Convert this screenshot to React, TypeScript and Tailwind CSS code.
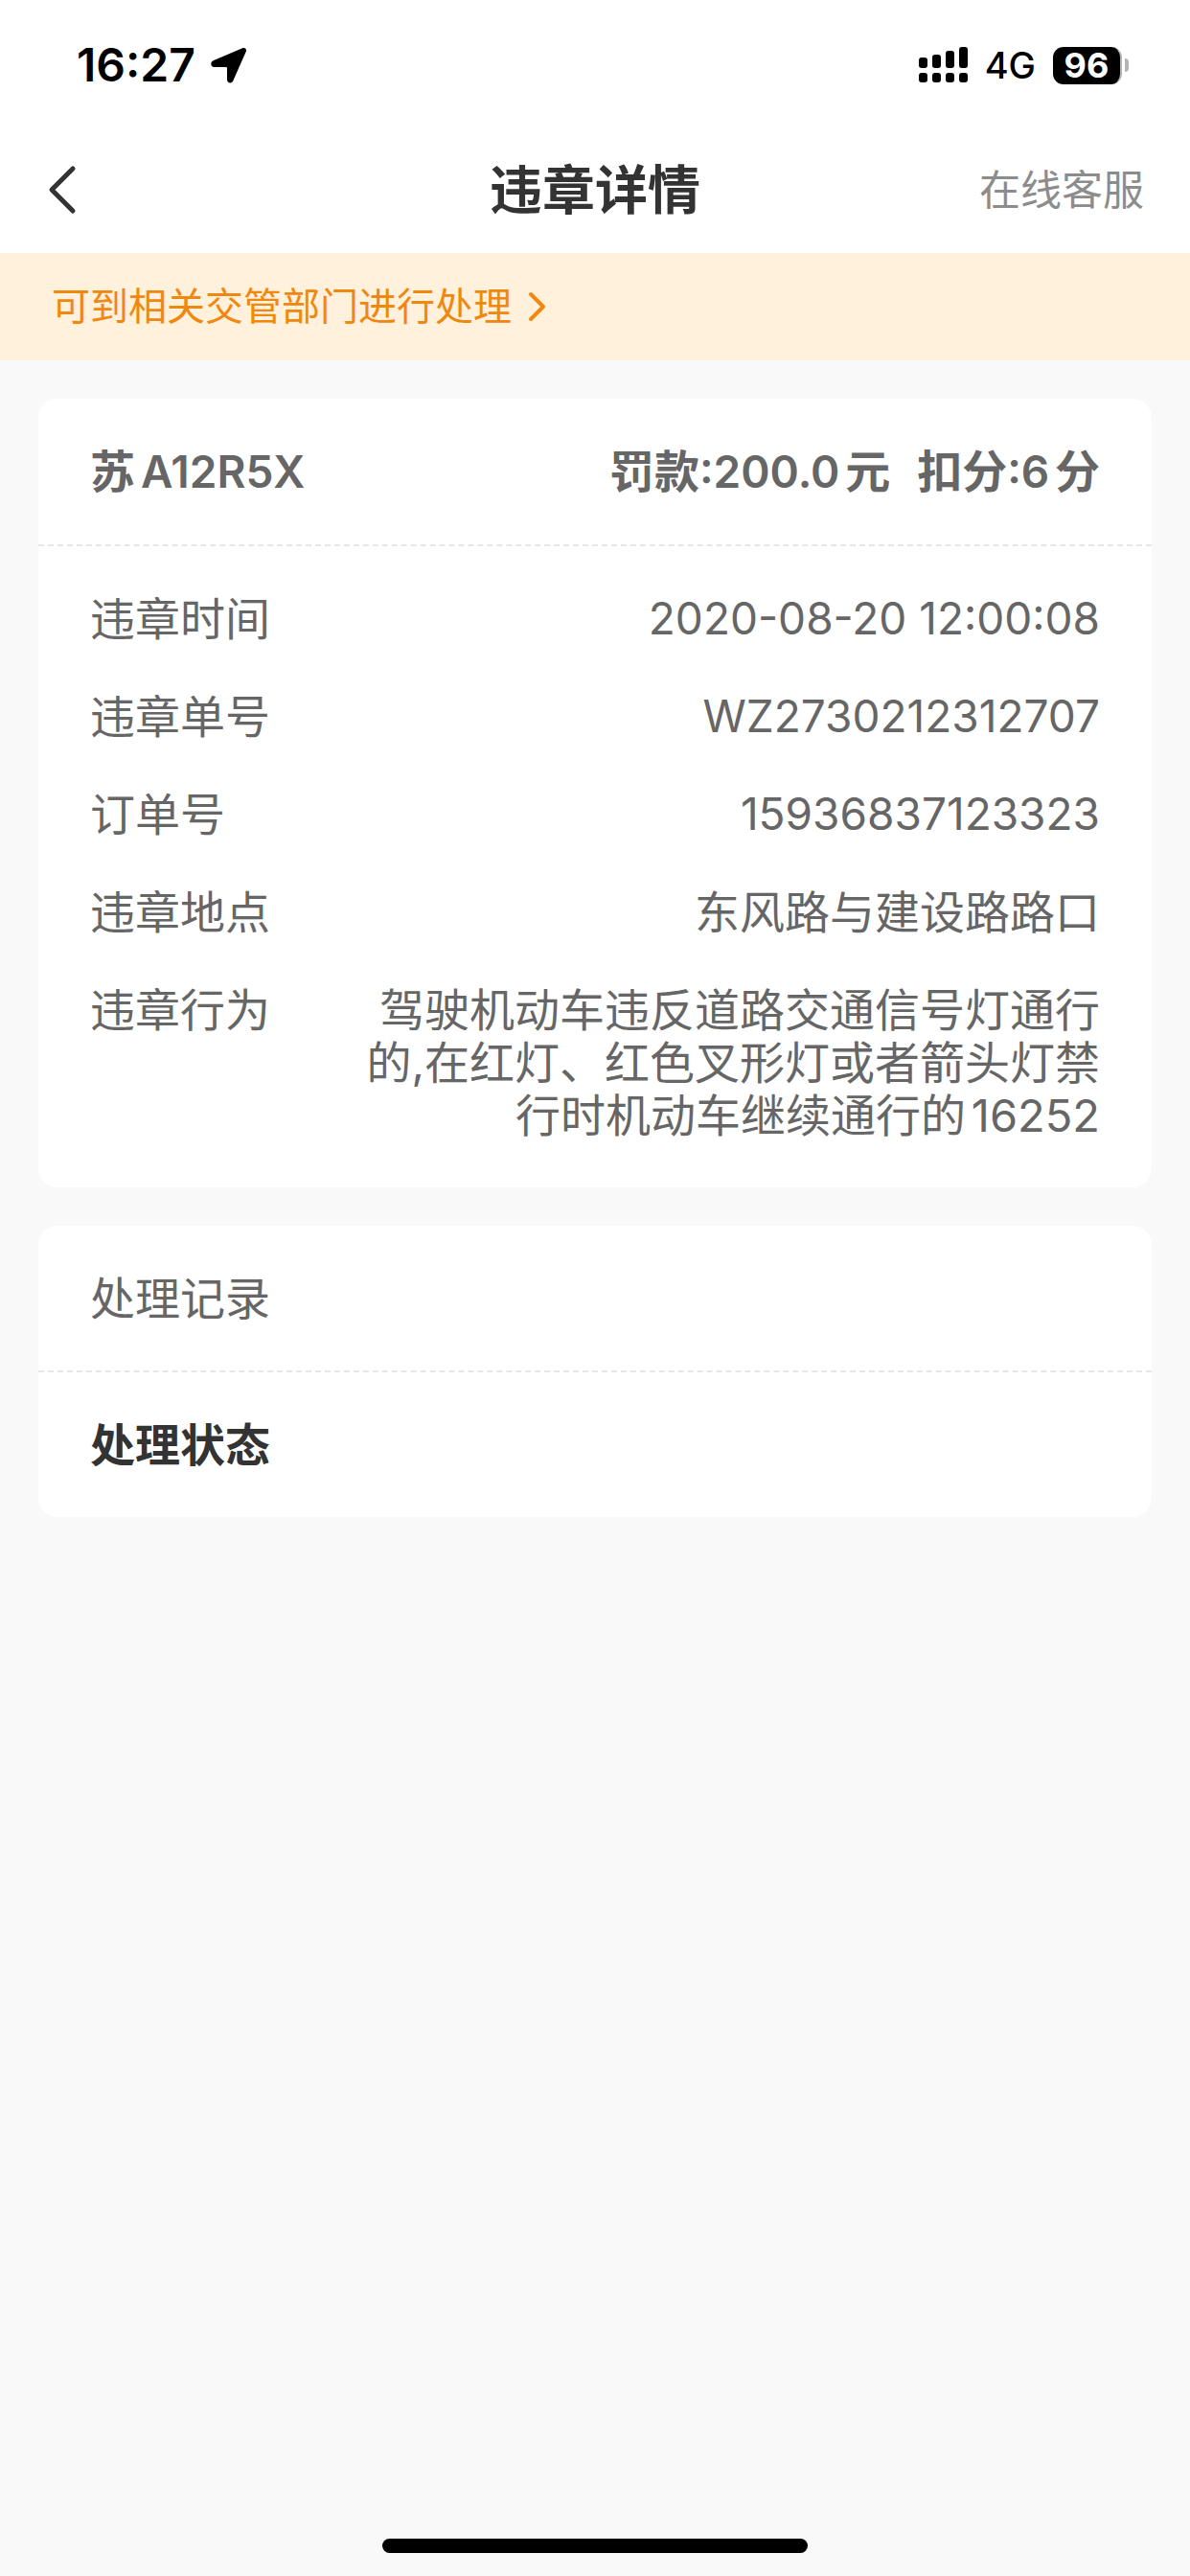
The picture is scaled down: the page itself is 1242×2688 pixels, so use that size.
import React from 'react';
import { clsx } from 'clsx';

type Row = {
  label: string;
  value: string;
};

const rows: Row[] = [
  { label: '违章时间', value: '2020-08-20 12:00:08' },
  { label: '违章单号', value: 'WZ2730212312707' },
  { label: '订单号', value: '15936837123323' },
  { label: '违章地点', value: '东风路与建设路路口' },
  {
    label: '违章行为',
    value:
      '驾驶机动车违反道路交通信号灯通行的,在红灯、红色叉形灯或者箭头灯禁行时机动车继续通行的16252',
  },
];

// numbers and latin letters are drawn a bit smaller than the chinese text
const isLatin = (text: string) => /^[\x20-\x7e]+$/.test(text);

const StatusBar = () => {
  return (
    <div className="flex h-[132px] items-center justify-between pt-1 pr-16 pl-20 text-black">
      <div className="flex items-center gap-4">
        <span className="text-[48px] leading-none font-semibold">16:27</span>
        <svg width="38" height="38" viewBox="0 0 38 38" aria-hidden="true">
          <path
            d="M2.5 14.2 33 1.3c2.8-1.1 4.8.9 3.7 3.7L23.2 35.5c-1.4 3-6.2 2.3-6.2-1.2V22.2c0-.8-.4-1.2-1.2-1.2H3.4C-.3 21-.8 15.700 2.5 14.2Z"
            fill="currentColor"
          />
        </svg>
      </div>
      <div className="flex items-center gap-[18px]">
        <svg width="51" height="38" viewBox="0 0 51 38" aria-hidden="true">
          <g fill="currentColor">
            <rect x="0" y="11" width="9" height="11" rx="3" />
            <rect x="14" y="8" width="9" height="14" rx="3" />
            <rect x="28" y="4" width="9" height="18" rx="3" />
            <rect x="42" y="0" width="9" height="22" rx="3" />
            <rect x="0" y="27" width="9" height="10" rx="3" />
            <rect x="14" y="27" width="9" height="10" rx="3" />
            <rect x="28" y="27" width="9" height="10" rx="3" />
            <rect x="42" y="27" width="9" height="10" rx="3" />
          </g>
        </svg>
        <span className="text-[38px] leading-none font-medium">4G</span>
        <div className="flex items-center gap-[3px]">
          <div className="flex h-[39px] w-[72px] items-center justify-center rounded-[11px] border-r-2 border-[#b4b4b4] bg-black text-[36px] leading-none font-bold text-white">
            96
          </div>
          <div className="h-[14px] w-1 rounded-r-full bg-[#b4b4b4]" />
        </div>
      </div>
    </div>
  );
};

const NavBar = () => {
  return (
    <div className="grid h-[132px] grid-cols-[1fr_auto_1fr] items-center pr-12 pl-12">
      <button type="button" aria-label="返回" className="justify-self-start">
        <svg width="33" height="54" viewBox="0 0 33 54" fill="none">
          <path
            d="M28 5 6 27 28 49"
            stroke="#333333"
            strokeWidth="5"
            strokeLinecap="round"
            strokeLinejoin="round"
          />
        </svg>
      </button>
      <h1 className="text-[55px] leading-none font-bold text-[#333333]">
        违章详情
      </h1>
      <a
        href="#service"
        className="justify-self-end text-[43px] leading-none text-[#8c8c8c]"
      >
        在线客服
      </a>
    </div>
  );
};

const Notice = () => {
  return (
    <a
      href="#notice"
      className="flex h-28 items-center gap-4 bg-[#fff1dc] px-[54px] text-[40px] leading-none text-[#f0870f]"
    >
      <span>可到相关交管部门进行处理</span>
      <svg width="20" height="34" viewBox="0 0 20 34" fill="none">
        <path
          d="M4 4 17 17 4 30"
          stroke="currentColor"
          strokeWidth="4"
          strokeLinecap="round"
          strokeLinejoin="round"
        />
      </svg>
    </a>
  );
};

const App = () => {
  return (
    <div className="flex min-h-screen flex-col bg-[#f9f9f9] font-['Inter','Noto_Sans_CJK_SC',sans-serif] text-[#666666] [text-autospace:normal]">
      <header className="bg-white">
        <StatusBar />
        <NavBar />
      </header>
      <Notice />

      <main className="flex flex-1 flex-col gap-10 p-10 text-[47px] leading-[55px]">
        <section className="rounded-[20px] bg-white">
          <div className="flex items-center justify-between border-b-2 border-dashed border-[#e6e6e6] px-[54px] py-12 font-semibold">
            <h2>
              苏<span className="text-[46px]">A12R5X</span>
            </h2>
            <div className="flex gap-7">
              <span>
                罚款<span className="text-[46px]">:200.0</span>元
              </span>
              <span>
                扣分<span className="text-[46px]">:6</span>分
              </span>
            </div>
          </div>
          <dl className="flex flex-col gap-[47px] px-[54px] py-12">
            {rows.map((row) => (
              <div key={row.label} className="flex justify-between">
                <dt className="shrink-0">{row.label}</dt>
                <dd
                  className={clsx(
                    'max-w-[780px] text-right',
                    isLatin(row.value) && 'text-[46px]'
                  )}
                >
                  {row.value}
                </dd>
              </div>
            ))}
          </dl>
        </section>

        <section className="rounded-[20px] bg-white">
          <h2 className="border-b-2 border-dashed border-[#e6e6e6] px-[54px] py-12">
            处理记录
          </h2>
          <p className="px-[54px] py-12 font-bold text-[#333333]">处理状态</p>
        </section>
      </main>

      <div className="flex justify-center pb-6">
        <div className="h-[15px] w-[444px] rounded-full bg-black" />
      </div>
    </div>
  );
};

export default App;
